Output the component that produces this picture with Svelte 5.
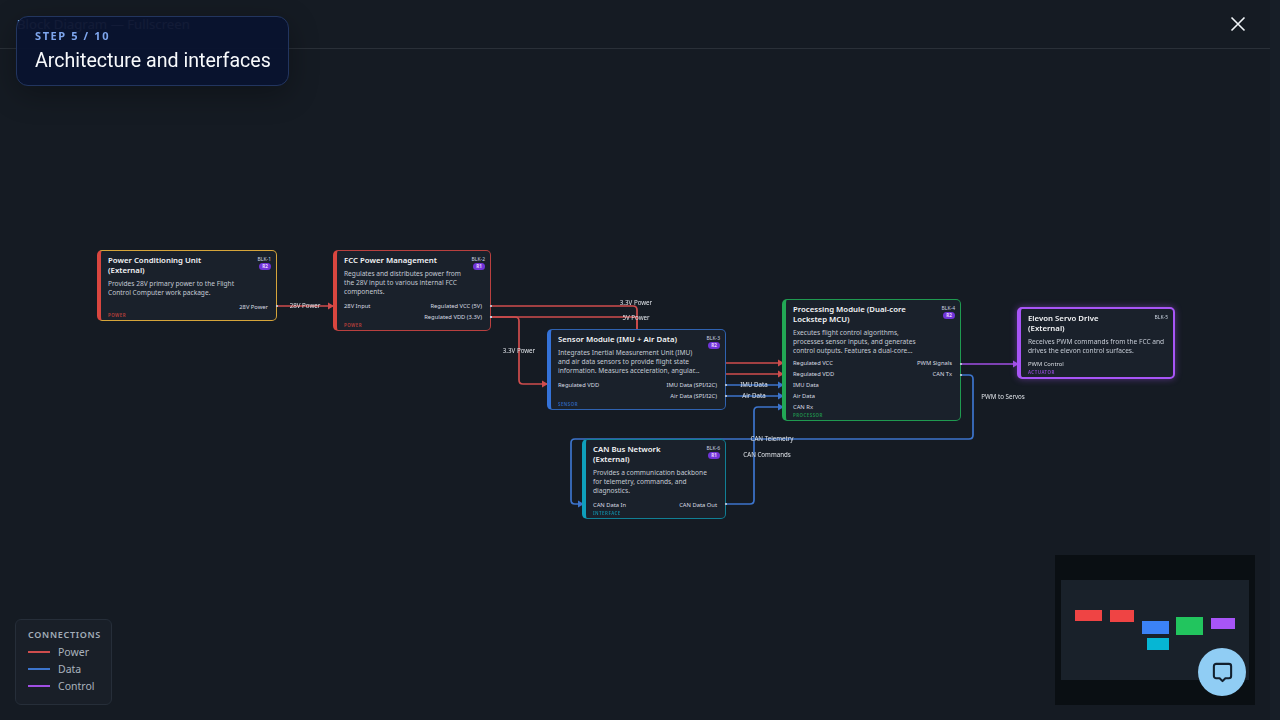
<script lang="ts">
	// Block diagram, fullscreen view, with the tour step card on top.
	const nodes = [
		{
			id: 'BLK-1', rev: 'R2', type: 'POWER', accent: '#d9463f', border: '#d6a53a', dw: 148, x: 97, y: 250, w: 180, h: 71,
			title: 'Power Conditioning Unit\n(External)',
			desc: 'Provides 28V primary power to the Flight Control Computer work package.',
			inputs: [], outputs: ['28V Power']
		},
		{
			id: 'BLK-2', rev: 'R1', type: 'POWER', accent: '#d9463f', border: '#b9403f', dw: 128, x: 333, y: 250, w: 158, h: 81,
			title: 'FCC Power Management',
			desc: 'Regulates and distributes power from the 28V input to various internal FCC components.',
			inputs: ['28V Input'], outputs: ['Regulated VCC (5V)', 'Regulated VDD (3.3V)']
		},
		{
			id: 'BLK-3', rev: 'R2', type: 'SENSOR', accent: '#3472d8', border: '#2f62b0', dw: 145, x: 547, y: 329, w: 179, h: 81,
			title: 'Sensor Module (IMU + Air Data)',
			desc: 'Integrates Inertial Measurement Unit (IMU) and air data sensors to provide flight state information. Measures acceleration, angular...',
			inputs: ['Regulated VDD'], outputs: ['IMU Data (SPI/I2C)', 'Air Data (SPI/I2C)']
		},
		{
			id: 'BLK-4', rev: 'R2', type: 'PROCESSOR', accent: '#22a755', border: '#1f9a50', dw: 130, x: 782, y: 299, w: 179, h: 122,
			title: 'Processing Module (Dual-core\nLockstep MCU)',
			desc: 'Executes flight control algorithms, processes sensor inputs, and generates control outputs. Features a dual-core...',
			inputs: ['Regulated VCC', 'Regulated VDD', 'IMU Data', 'Air Data', 'CAN Rx'], outputs: ['PWM Signals', 'CAN Tx']
		},
		{
			id: 'BLK-5', rev: '', type: 'ACTUATOR', accent: '#a855f7', border: '#a855f7', dw: 142, x: 1017, y: 307, w: 158, h: 72,
			title: 'Elevon Servo Drive\n(External)',
			desc: 'Receives PWM commands from the FCC and drives the elevon control surfaces.',
			inputs: ['PWM Control'], outputs: []
		},
		{
			id: 'BLK-6', rev: 'R1', type: 'INTERFACE', accent: '#0f9fbb', border: '#117f95', dw: 122, x: 582, y: 439, w: 144, h: 80,
			title: 'CAN Bus Network\n(External)',
			desc: 'Provides a communication backbone for telemetry, commands, and diagnostics.',
			inputs: ['CAN Data In'], outputs: ['CAN Data Out']
		}
	];

	const RED = '#cf4d4d';
	const BLUE = '#3c74cc';
	const PURPLE = '#a04fe4';

	const edges = [
		{ color: RED, d: 'M277 306H333', start: [277, 306], end: [334, 306] },
		{ color: RED, d: 'M491 306H633Q637 306 637 310V359Q637 363 641 363H782', start: [491, 306], end: [784, 363] },
		{ color: RED, d: 'M491 317H515Q519 317 519 321V380Q519 384 523 384H547', start: [491, 317], end: [548, 384] },
		{ color: RED, d: 'M491 317H637V374H782', start: [491, 317], end: [784, 374] },
		{ color: BLUE, d: 'M726 385H782', start: [726, 385], end: [784, 385] },
		{ color: BLUE, d: 'M726 396H782', start: [726, 396], end: [784, 396] },
		{ color: BLUE, d: 'M726 504H750Q754 504 754 500V411Q754 407 758 407H782', start: [726, 504], end: [784, 407] },
		{ color: BLUE, d: 'M961 375H969Q973 375 973 379V435Q973 439 969 439H575Q571 439 571 443V500Q571 504 575 504H582', start: [961, 375], end: [584, 504] },
		{ color: PURPLE, d: 'M961 364H1017', start: [961, 364], end: [1019, 364] }
	];

	const edgeLabels = [
		{ text: '28V Power', x: 305, y: 306 },
		{ text: '3.3V Power', x: 636, y: 303 },
		{ text: '5V Power', x: 636, y: 318 },
		{ text: '3.3V Power', x: 519, y: 351 },
		{ text: 'IMU Data', x: 754, y: 385 },
		{ text: 'Air Data', x: 754, y: 396 },
		{ text: 'CAN Telemetry', x: 772, y: 439 },
		{ text: 'CAN Commands', x: 767, y: 455 },
		{ text: 'PWM to Servos', x: 1003, y: 397 }
	];

	const legend = [
		{ label: 'Power', color: '#cf4d4d' },
		{ label: 'Data', color: '#3c74cc' },
		{ label: 'Control', color: '#a04fe4' }
	];

	const miniNodes = [
		{ x: 14, y: 30, w: 27, h: 11, color: '#ef4444' },
		{ x: 49, y: 30, w: 24, h: 12, color: '#ef4444' },
		{ x: 81, y: 41, w: 27, h: 13, color: '#3b82f6' },
		{ x: 115, y: 37, w: 27, h: 18, color: '#22c55e' },
		{ x: 150, y: 38, w: 24, h: 11, color: '#a855f7' },
		{ x: 86, y: 58, w: 22, h: 12, color: '#06b6d4' }
	];
</script>

<div class="page">
	<div class="main">
		<header class="topbar">
			<h1>Block Diagram — Fullscreen</h1>
			<button class="close" aria-label="Close">
				<svg width="16" height="16" viewBox="0 0 16 16"><path d="M1.500 1.500l13 13M14.500 1.500l-13 13" stroke="#f1f5f9" stroke-width="1.600" /></svg>
			</button>
		</header>

		<div class="canvas">
			<svg class="edges" width="1280" height="720" viewBox="0 0 1280 720">
				{#each edges as e}
					<path d={e.d} fill="none" stroke={e.color} stroke-width="1.700" />
					<path d="M{e.end[0] - 6} {e.end[1] - 3.500}L{e.end[0]} {e.end[1]}L{e.end[0] - 6} {e.end[1] + 3.500}Z" fill={e.color} />
				{/each}
				{#each edgeLabels as l}
					<text x={l.x} y={l.y + 2.200} text-anchor="middle">{l.text}</text>
				{/each}
			</svg>

			{#each nodes as n}
				<article
					class="node"
					class:glow={n.type === 'ACTUATOR'}
					style="left:{n.x}px;top:{n.y}px;width:{n.w}px;height:{n.h}px;border-color:{n.border};border-left-color:{n.accent}"
				>
					<div class="node-head">
						<h3>{n.title}</h3>
						<div class="meta">
							<span class="blk">{n.id}</span>
							{#if n.rev}<span class="rev">{n.rev}</span>{/if}
						</div>
					</div>
					<p class="desc" style="width:{n.dw}px">{n.desc}</p>
					<div class="ports">
						<div class="port-col">
							{#each n.inputs as p}<span>{p}</span>{/each}
						</div>
						<div class="port-col out">
							{#each n.outputs as p}<span>{p}</span>{/each}
						</div>
					</div>
					<span class="type" style="color:{n.accent}">{n.type}</span>
				</article>
			{/each}

			<svg class="edges handles" width="1280" height="720" viewBox="0 0 1280 720">
				{#each edges as e}
					<circle cx={e.start[0]} cy={e.start[1]} r="1.100" fill="#c9d3e0" />
				{/each}
			</svg>
		</div>
	</div>
	<div class="gutter"></div>

	<div class="tour-card">
		<div class="step">STEP 5 / 10</div>
		<div class="tour-title">Architecture and interfaces</div>
	</div>

	<aside class="legend">
		<h4>CONNECTIONS</h4>
		{#each legend as item}
			<div class="legend-row">
				<i style="background:{item.color}"></i>
				<span>{item.label}</span>
			</div>
		{/each}
	</aside>

	<div class="minimap">
		<div class="mini-view">
			{#each miniNodes as m}
				<b style="left:{m.x}px;top:{m.y}px;width:{m.w}px;height:{m.h}px;background:{m.color}"></b>
			{/each}
		</div>
	</div>

	<button class="chat" aria-label="Open chat">
		<svg width="23" height="23" viewBox="0 0 20 20" fill="none">
			<path d="M4.500 2.500h11a2 2 0 0 1 2 2v8.500a2 2 0 0 1-2 2h-3L10 17.500 7.500 15h-3a2 2 0 0 1-2-2V4.500a2 2 0 0 1 2-2z" stroke="#12202e" stroke-width="1.800" stroke-linejoin="round" />
		</svg>
	</button>
</div>

<style>
	:global(body) {
		margin: 0;
		background: #151b23;
	}

	.page {
		position: relative;
		display: flex;
		width: 1280px;
		height: 720px;
		overflow: hidden;
		background: #151b23;
		font-family: 'Noto Sans', 'Open Sans', sans-serif;
	}

	.main {
		flex: 1;
		display: flex;
		flex-direction: column;
		min-width: 0;
	}

	.gutter {
		width: 10px;
		background: #171e27;
	}

	.topbar {
		flex: none;
		display: flex;
		align-items: center;
		justify-content: space-between;
		height: 48px;
		padding: 0 24px 0 17px;
		border-bottom: 1px solid #2a3038;
	}

	h1 {
		margin: 0;
		font-size: 13.200px;
		font-weight: 400;
		color: #e5e7eb;
	}

	.close {
		display: flex;
		padding: 0;
		border: 0;
		background: none;
	}

	.canvas {
		position: relative;
		flex: 1;
		filter: blur(0.4px);
	}

	.edges {
		position: absolute;
		left: 0;
		top: -49px;
	}

	.handles {
		pointer-events: none;
	}

	.edges text {
		font-size: 6.200px;
		fill: #dfe3e8;
	}

	.node {
		position: absolute;
		box-sizing: border-box;
		display: flex;
		flex-direction: column;
		margin-top: -49px;
		padding: 4px 8px 1px 7px;
		border: 1.500px solid;
		border-left-width: 4px;
		border-radius: 5px;
		background: #1a212b;
		color: #e5e7eb;
	}

	.glow {
		border-width: 2px;
		border-left-width: 4px;
		box-shadow: 0 0 7px rgba(168, 85, 247, 0.45);
	}

	.node-head {
		display: flex;
		justify-content: space-between;
		gap: 12px;
		margin-right: -3px;
	}

	h3 {
		margin: 0;
		font-size: 7.800px;
		line-height: 10px;
		font-weight: 600;
		white-space: pre-line;
		color: #f3f4f6;
	}

	.meta {
		flex: none;
		display: flex;
		flex-direction: column;
		align-items: flex-end;
		gap: 1px;
		padding-top: 1px;
		margin-bottom: -6px;
	}

	.blk {
		font-size: 5px;
		line-height: 6px;
		color: #cbd5e1;
	}

	.rev {
		padding: 0 3px;
		border-radius: 4px;
		background: #7034d8;
		color: #e9d5ff;
		font-size: 4.600px;
		line-height: 7px;
		font-weight: 700;
	}

	.desc {
		margin: 4px 0 0;
		font-size: 6.600px;
		line-height: 9.200px;
		color: #c4cad4;
	}

	.ports {
		display: flex;
		justify-content: space-between;
		margin-top: auto;
	}

	.port-col {
		display: flex;
		flex-direction: column;
		font-size: 5.800px;
		line-height: 11px;
		color: #d9dde3;
	}

	.out {
		align-items: flex-end;
	}

	.type {
		margin-top: -1px;
		font-size: 4.400px;
		line-height: 7px;
		font-weight: 600;
		letter-spacing: 0.5px;
		opacity: 0.85;
	}

	.tour-card {
		position: absolute;
		left: 16px;
		top: 16px;
		box-sizing: border-box;
		width: 273px;
		height: 70px;
		padding: 11px 18px;
		border: 1px solid #22355f;
		border-radius: 12px;
		background: rgba(9, 19, 47, 0.96);
		box-shadow: 0 8px 30px rgba(0, 0, 0, 0.3);
	}

	.step {
		font-size: 11px;
		line-height: 15px;
		font-weight: 700;
		letter-spacing: 1.600px;
		color: #7ea6ee;
	}

	.tour-title {
		margin-top: 5px;
		font-family: Roboto, 'Noto Sans', sans-serif;
		font-size: 19.600px;
		line-height: 26px;
		font-weight: 400;
		white-space: nowrap;
		color: #f8fafc;
	}

	.legend {
		position: absolute;
		left: 15px;
		top: 619px;
		box-sizing: border-box;
		width: 97px;
		height: 86px;
		padding: 8px 12px;
		border: 1px solid #262e39;
		border-radius: 6px;
		background: #191f28;
	}

	h4 {
		margin: 0 0 2px;
		font-size: 9px;
		line-height: 13px;
		font-weight: 600;
		letter-spacing: 0.7px;
		color: #a3adb9;
	}

	.legend-row {
		display: flex;
		align-items: center;
		gap: 8px;
		height: 17px;
		font-size: 10.500px;
		color: #a9b2bd;
	}

	.legend-row i {
		width: 22px;
		height: 2px;
	}

	.minimap {
		position: absolute;
		left: 1055px;
		top: 555px;
		display: flex;
		align-items: center;
		justify-content: center;
		width: 200px;
		height: 150px;
		background: #0a0f13;
	}

	.mini-view {
		position: relative;
		width: 188px;
		height: 100px;
		background: #19212a;
	}

	.mini-view b {
		position: absolute;
	}

	.chat {
		position: absolute;
		left: 1198px;
		top: 648px;
		display: flex;
		align-items: center;
		justify-content: center;
		width: 48px;
		height: 48px;
		padding: 0;
		border: 0;
		border-radius: 50%;
		background: #90cdf4;
	}
</style>
